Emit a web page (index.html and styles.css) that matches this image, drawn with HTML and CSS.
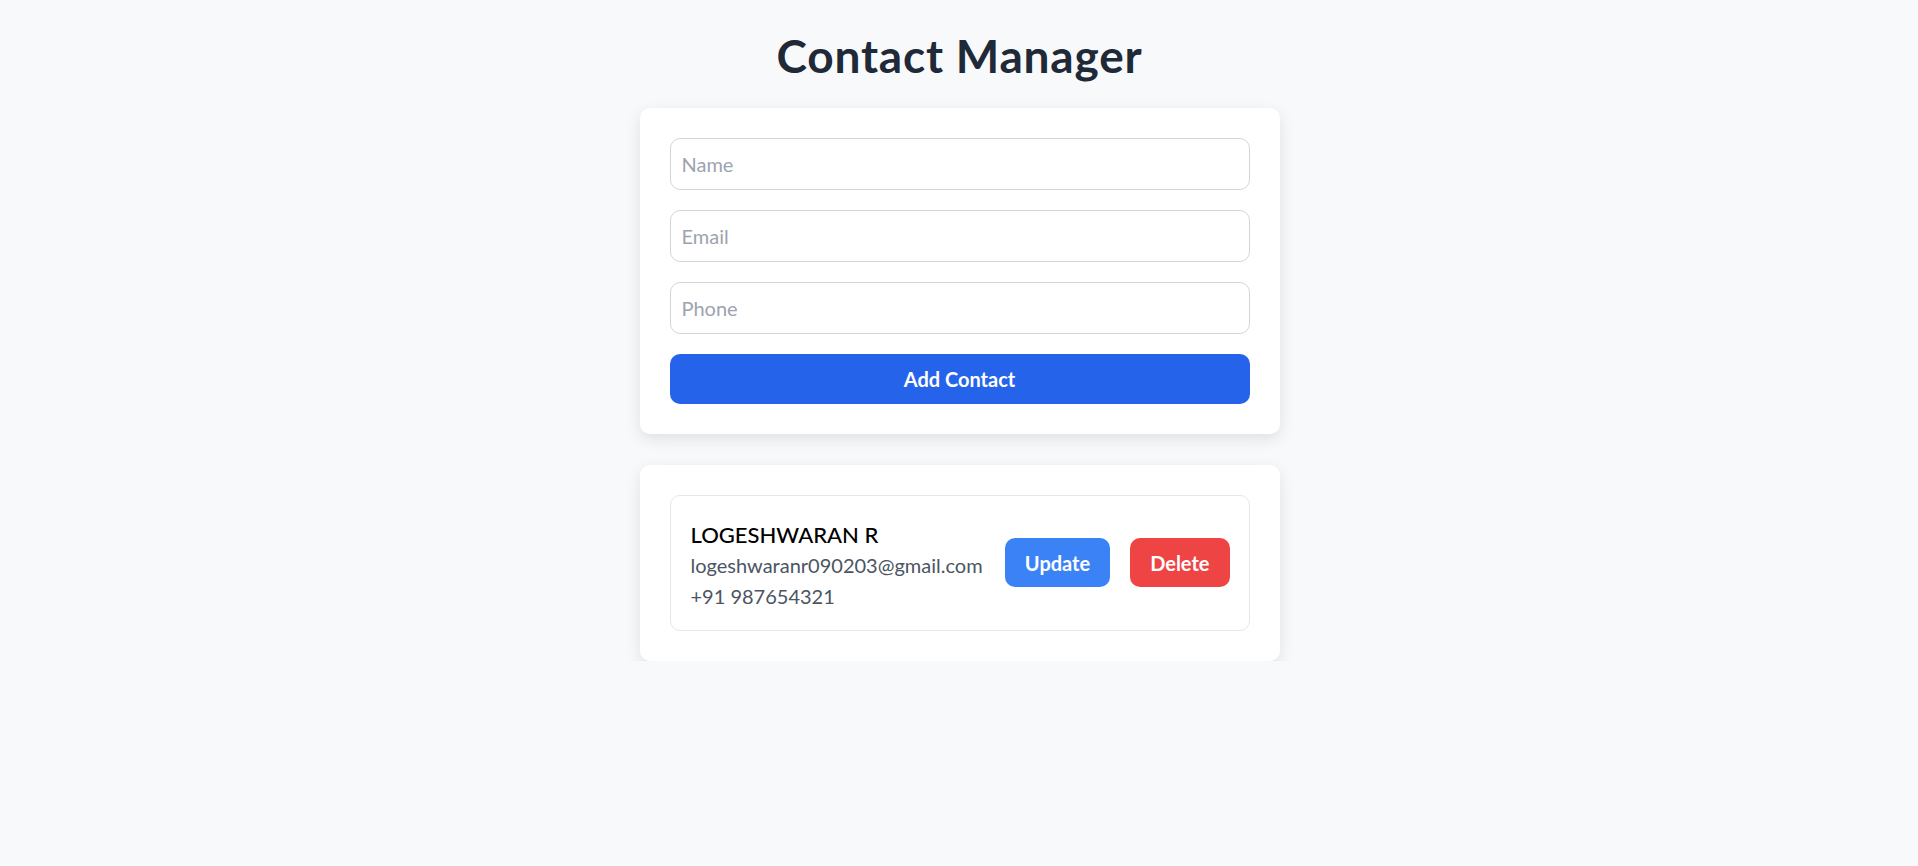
FILE: index.html
```html
<!DOCTYPE html>
<html lang="en">
<head>
<meta charset="utf-8">
<title>Contact Manager</title>
<link rel="stylesheet" href="styles.css">
</head>
<body>
<main class="app">
  <h1 class="title">Contact Manager</h1>
  <section class="card form-card">
    <input class="field" type="text" placeholder="Name">
    <input class="field" type="email" placeholder="Email">
    <input class="field" type="tel" placeholder="Phone">
    <button class="btn btn-add" type="button">Add Contact</button>
  </section>
  <section class="card list-card">
    <div class="contact">
      <div class="contact-info">
        <div class="contact-name">LOGESHWARAN R</div>
        <div class="contact-line">logeshwaranr090203@gmail.com</div>
        <div class="contact-line">+91 987654321</div>
      </div>
      <div class="contact-actions">
        <button class="btn btn-update" type="button">Update</button>
        <button class="btn btn-delete" type="button">Delete</button>
      </div>
    </div>
  </section>
</main>
</body>
</html>
```
FILE: styles.css
```css
* { box-sizing: border-box; }

html, body {
  margin: 0;
  padding: 0;
  background: #f8f9fa;
  font-family: "Lato", "Noto Sans", sans-serif;
}

.app {
  display: flex;
  flex-direction: column;
  align-items: center;
  padding: 29px 0 0 1px;
}

.title {
  margin: 0 0 25px;
  font-size: 46px;
  line-height: 54px;
  letter-spacing: 0.8px;
  font-weight: 700;
  color: #1f2937;
}

.card {
  width: 640px;
  background: #fff;
  border-radius: 10px;
  box-shadow: 0 5px 15px rgba(0, 0, 0, 0.1);
  padding: 30px;
}

.form-card {
  display: flex;
  flex-direction: column;
  gap: 20.5px;
}

.field {
  height: 51.5px;
  width: 100%;
  border: 1px solid #d1d5db;
  border-radius: 10px;
  padding: 0 11px;
  font-family: inherit;
  font-size: 20px;
  color: #111;
  background: #fff;
  outline: none;
}

.field::placeholder { color: #9ca3af; }

.btn {
  border: none;
  border-radius: 10px;
  color: #fff;
  font-family: inherit;
  font-weight: 700;
  font-size: 20px;
  line-height: 24px;
  padding: 12.5px 20px;
  cursor: pointer;
}

.btn-add {
  width: 100%;
  background: #2563eb;
  padding: 13px 20px;
}

.list-card { margin-top: 30.5px; }

.contact {
  display: flex;
  align-items: center;
  justify-content: space-between;
  border: 1px solid #e5e7eb;
  border-radius: 10px;
  padding: 0 19px 0 20px;
  height: 136px;
}

.contact-info {
  display: flex;
  flex-direction: column;
  padding-top: 5px;
}

.contact-name {
  font-size: 22px;
  line-height: 31px;
  color: #000;
  font-weight: 500;
}

.contact-line {
  font-size: 20px;
  line-height: 31px;
  color: #4b5563;
}

.contact-actions {
  display: flex;
  gap: 20px;
}

.btn-update { background: #3b82f6; }
.btn-delete { background: #ef4444; }
```
